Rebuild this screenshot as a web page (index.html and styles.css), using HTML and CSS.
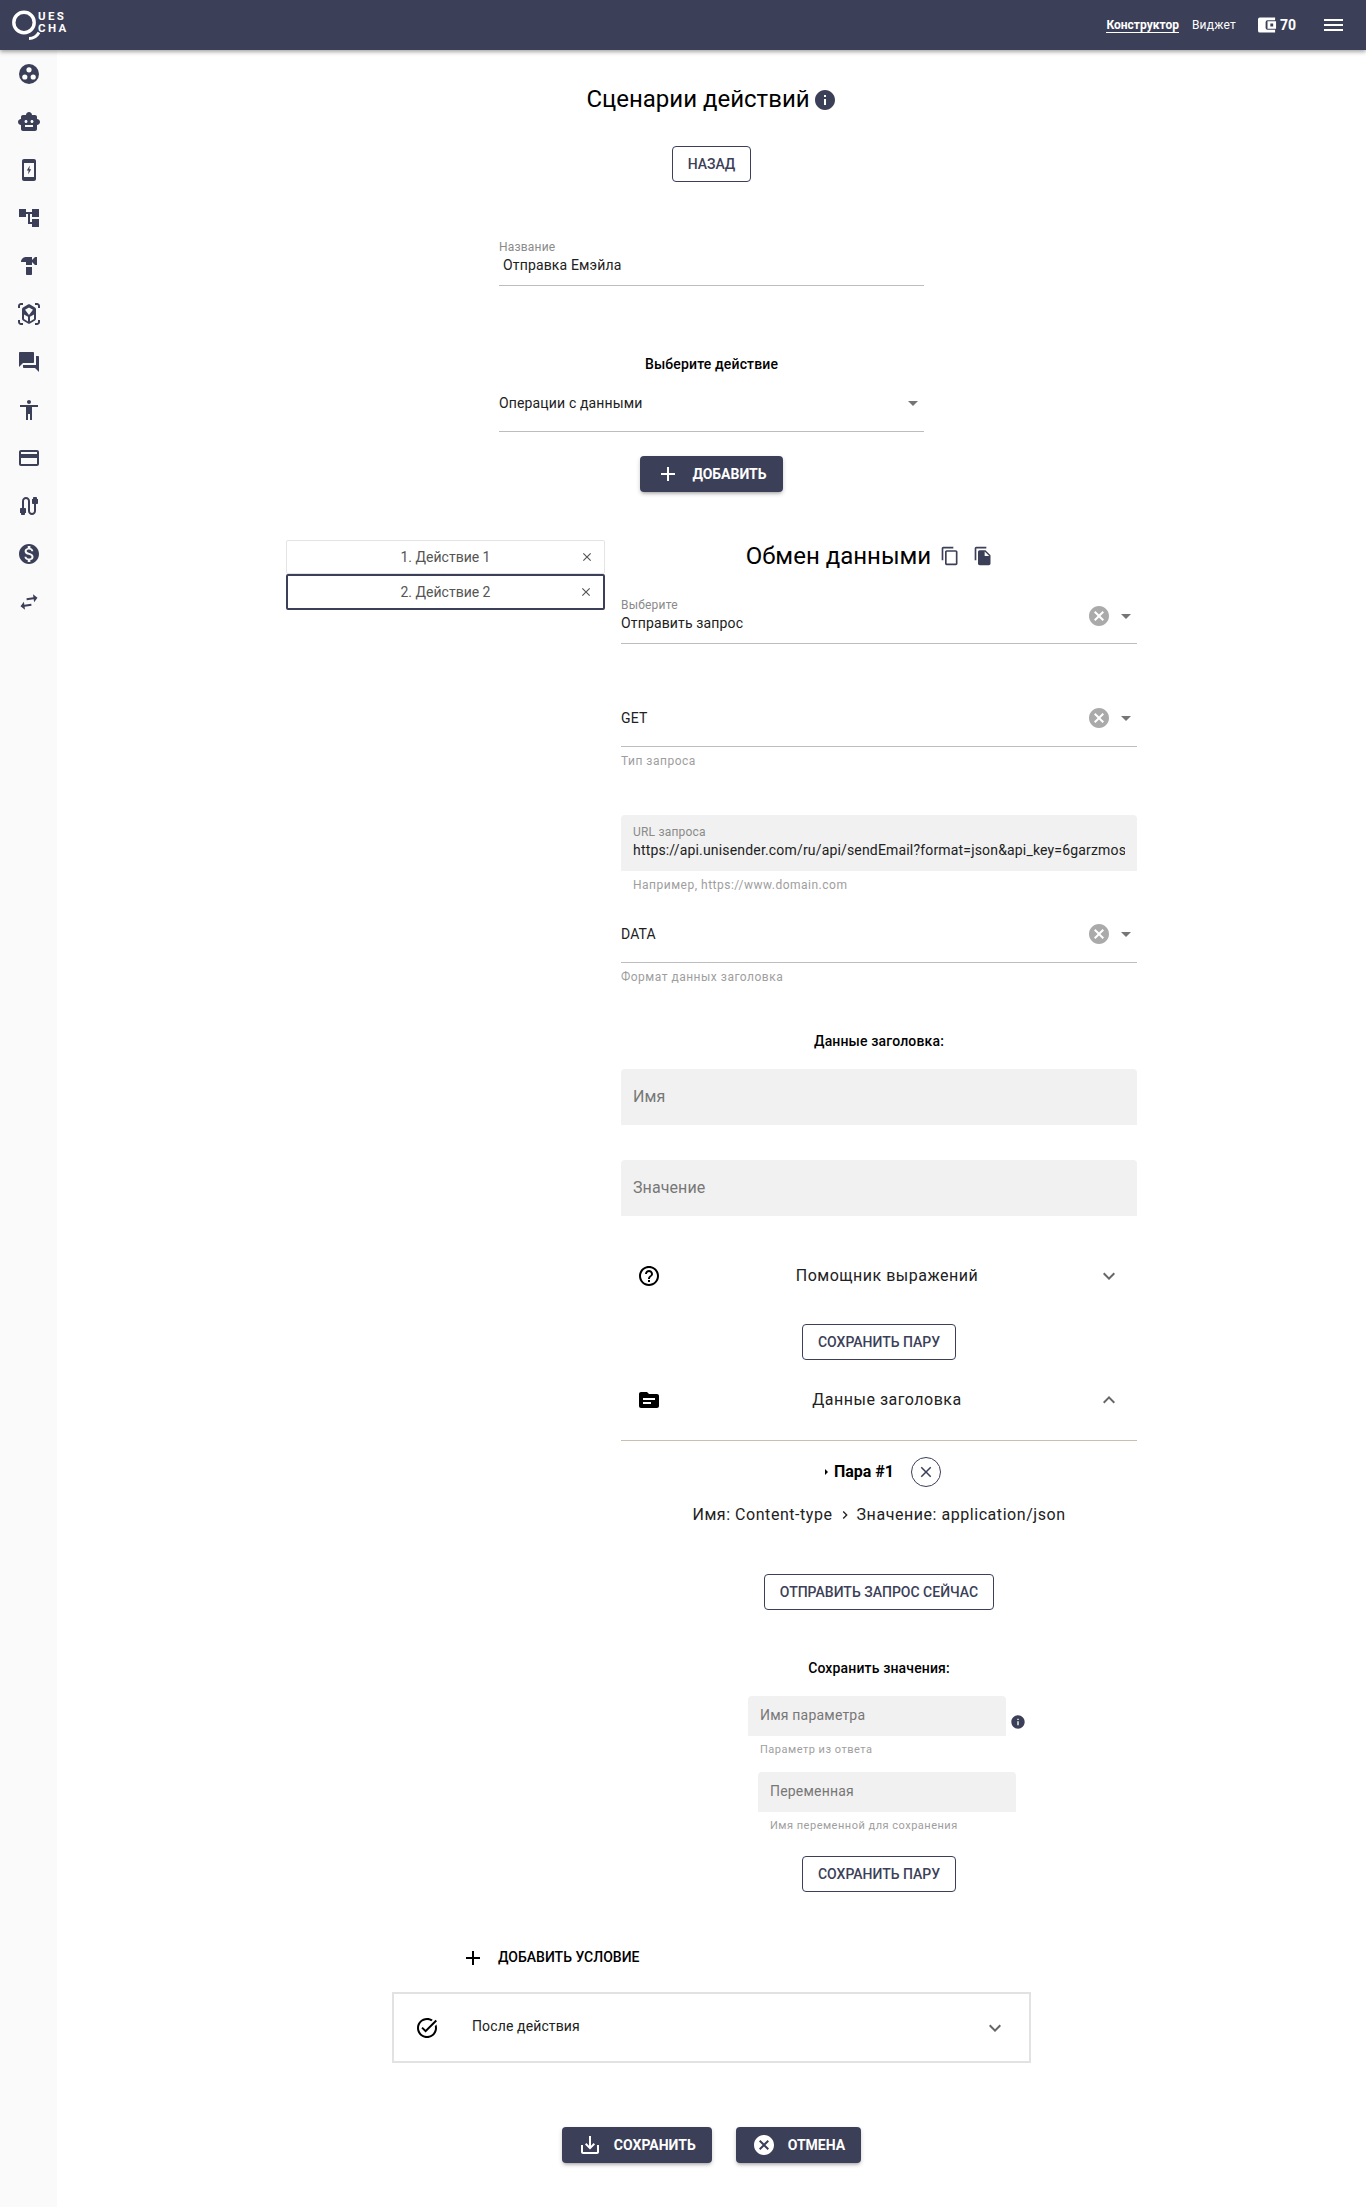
FILE: index.html
```html
<!DOCTYPE html>
<html lang="ru">
<head>
  <meta charset="UTF-8">
  <meta name="viewport" content="width=device-width, initial-scale=1.0">
  <title>Сценарии действий</title>
  <link rel="stylesheet" href="styles.css">
</head>
<body>
  <!-- Icon sprite -->
  <svg class="sprite" xmlns="http://www.w3.org/2000/svg">
    <symbol id="i-add" viewBox="0 0 24 24"><path d="M19 13h-6v6h-2v-6H5v-2h6V5h2v6h6v2z"/></symbol>
    <symbol id="i-close" viewBox="0 0 24 24"><path d="M19 6.41L17.59 5 12 10.59 6.41 5 5 6.41 10.59 12 5 17.59 6.41 19 12 13.41 17.59 19 19 17.59 13.41 12z"/></symbol>
    <symbol id="i-cancel" viewBox="0 0 24 24"><path d="M12 2C6.47 2 2 6.47 2 12s4.47 10 10 10 10-4.47 10-10S17.53 2 12 2zm5 13.59L15.59 17 12 13.41 8.41 17 7 15.59 10.59 12 7 8.41 8.41 7 12 10.59 15.59 7 17 8.41 13.41 12 17 15.59z"/></symbol>
    <symbol id="i-info" viewBox="0 0 24 24"><path d="M12 2C6.48 2 2 6.48 2 12s4.48 10 10 10 10-4.48 10-10S17.52 2 12 2zm1 15h-2v-6h2v6zm0-8h-2V7h2v2z"/></symbol>
    <symbol id="i-more" viewBox="0 0 24 24"><path d="M16.59 8.59L12 13.17 7.41 8.59 6 10l6 6 6-6z"/></symbol>
    <symbol id="i-less" viewBox="0 0 24 24"><path d="M12 8l-6 6 1.41 1.41L12 10.83l4.59 4.58L18 14z"/></symbol>
  </svg>

  <header class="topbar">
    <div class="logo">
      <svg class="logo-mark" viewBox="0 0 30 32"><circle cx="12" cy="12.500" r="10.200" fill="none" stroke="#fff" stroke-width="3.400"/><path d="M17 28.500c4 0 8-2.500 10-6" fill="none" stroke="#fff" stroke-width="3"/></svg>
      <div class="logo-text"><span>UES</span><span>CHA</span></div>
    </div>
    <nav class="top-nav">
      <a href="#" class="top-link active">Конструктор</a>
      <a href="#" class="top-link widget-link">Виджет</a>
      <span class="balance">
        <svg class="wallet" viewBox="0 0 20 16"><path d="M2 0h16v3h-8a2 2 0 0 0-2 2v6a2 2 0 0 0 2 2h8v3H2a2 2 0 0 1-2-2V2a2 2 0 0 1 2-2zM10 4h9v8h-9zm3 2.500v3h3v-3z" fill="#fff" fill-rule="evenodd"/></svg>
        70
      </span>
      <span class="burger"><i></i><i></i><i></i></span>
    </nav>
  </header>

  <div class="layout">
    <aside class="sidebar">
      <a href="#"><svg viewBox="0 0 24 24"><circle cx="12" cy="12" r="10"/><circle cx="12" cy="7.800" r="2.600" fill="#fff"/><circle cx="7.800" cy="15" r="2.600" fill="#fff"/><circle cx="16.200" cy="15" r="2.600" fill="#fff"/></svg></a>
      <a href="#"><svg viewBox="0 0 24 24"><path d="M20 9V7c0-1.100-.9-2-2-2h-3c0-1.660-1.340-3-3-3S9 3.340 9 5H6c-1.100 0-2 .9-2 2v2c-1.660 0-3 1.340-3 3s1.340 3 3 3v4c0 1.100.9 2 2 2h12c1.100 0 2-.9 2-2v-4c1.660 0 3-1.340 3-3s-1.340-3-3-3zM7.500 11.500C7.500 10.670 8.170 10 9 10s1.500.67 1.500 1.500S9.830 13 9 13s-1.500-.67-1.500-1.500zM16 17H8v-2h8v2zm-1-4c-.83 0-1.500-.67-1.500-1.500S14.170 10 15 10s1.500.67 1.500 1.500S15.830 13 15 13z"/></svg></a>
      <a href="#"><svg viewBox="0 0 24 24"><path d="M17 1H7C5.900 1 5 1.900 5 3v18c0 1.100.9 2 2 2h10c1.100 0 2-.9 2-2V3c0-1.100-.9-2-2-2zm0 18H7V5h10v14z"/><path d="M12.800 7.500L9.800 12.600h1.800l-.5 3.900 3.100-5.300h-1.900z"/></svg></a>
      <a href="#"><svg viewBox="0 0 24 24"><path d="M22 11V3h-7v3H9V3H2v8h7V8h2v10h4v3h7v-8h-7v3h-2V8h2v3z"/></svg></a>
      <a href="#"><svg viewBox="0 0 24 24"><path d="M18 3l-3 3V3H9C6.240 3 4 5.240 4 8h5v3h6V8l3 3h2V3h-2z"/><path d="M9 13v7c0 .55.45 1 1 1h4c.55 0 1-.45 1-1v-7H9z"/></svg></a>
      <a href="#"><svg viewBox="0 0 24 24"><path d="M3 4c0-.55.45-1 1-1h2V1H4C2.340 1 1 2.340 1 4v2h2V4zm0 16v-2H1v2c0 1.660 1.340 3 3 3h2v-2H4c-.55 0-1-.45-1-1zM20 1h-2v2h2c.55 0 1 .45 1 1v2h2V4c0-1.660-1.340-3-3-3zm1 19c0 .55-.45 1-1 1h-2v2h2c1.660 0 3-1.340 3-3v-2h-2v2zm-2-3.130V7.130c0-.71-.38-1.370-1-1.730l-5-2.880c-.31-.18-.65-.27-1-.27s-.69.09-1 .27L6 5.390c-.62.36-1 1.020-1 1.740v9.740c0 .72.38 1.380 1 1.740l5 2.880c.31.18.65.27 1 .27s.69-.09 1-.27l5-2.880c.62-.36 1-1.020 1-1.740zm-8 2.550l-4-2.320v-4.630l4 2.330v4.620zm1-6.350L8.040 7.750 12 5.450l3.960 2.300L12 13.070zm5 4.030l-4 2.320v-4.620l4-2.330v4.630z"/></svg></a>
      <a href="#"><svg viewBox="0 0 24 24"><path d="M21 6h-2v9H6v2c0 .55.45 1 1 1h11l4 4V7c0-.55-.45-1-1-1zm-4 6V3c0-.55-.45-1-1-1H3c-.55 0-1 .45-1 1v14l4-4h10c.55 0 1-.45 1-1z"/></svg></a>
      <a href="#"><svg viewBox="0 0 24 24"><path d="M12 2c1.100 0 2 .9 2 2s-.9 2-2 2-2-.9-2-2 .9-2 2-2zm9 7h-6v13h-2v-6h-2v6H9V9H3V7h18v2z"/></svg></a>
      <a href="#"><svg viewBox="0 0 24 24"><path d="M20 4H4c-1.110 0-1.990.89-1.990 2L2 18c0 1.110.89 2 2 2h16c1.110 0 2-.89 2-2V6c0-1.110-.89-2-2-2zm0 14H4v-6h16v6zm0-10H4V6h16v2z"/></svg></a>
      <a href="#"><svg viewBox="0 0 24 24"><path d="M20 5V4c0-.55-.45-1-1-1h-2c-.55 0-1 .45-1 1v1h-1v4c0 .55.45 1 1 1h1v7c0 1.100-.9 2-2 2s-2-.9-2-2V7c0-2.210-1.790-4-4-4S5 4.790 5 7v7H4c-.55 0-1 .45-1 1v4h1v1c0 .55.45 1 1 1h2c.55 0 1-.45 1-1v-1h1v-4c0-.55-.45-1-1-1H7V7c0-1.100.9-2 2-2s2 .9 2 2v10c0 2.210 1.790 4 4 4s4-1.790 4-4v-7h1c.55 0 1-.45 1-1V5h-1z"/></svg></a>
      <a href="#"><svg viewBox="0 0 24 24"><path d="M12 2C6.480 2 2 6.480 2 12s4.480 10 10 10 10-4.480 10-10S17.520 2 12 2zm1.410 16.090V20h-2.670v-1.930c-1.710-.36-3.160-1.460-3.270-3.400h1.960c.1 1.050.82 1.870 2.650 1.870 1.960 0 2.400-.98 2.400-1.590 0-.83-.44-1.610-2.670-2.140-2.480-.6-4.180-1.620-4.180-3.670 0-1.720 1.390-2.840 3.110-3.210V4h2.670v1.950c1.860.45 2.790 1.860 2.850 3.390H14.300c-.05-1.110-.64-1.870-2.220-1.870-1.500 0-2.400.68-2.400 1.640 0 .84.65 1.390 2.670 1.910s4.180 1.390 4.180 3.910c-.01 1.830-1.380 2.830-3.120 3.160z"/></svg></a>
      <a href="#"><svg viewBox="0 0 24 24"><path transform="rotate(-8 12 12)" d="M6.990 11L3 15l3.990 4v-3H14v-2H6.990v-3zM21 9l-3.990-4v3H10v2h7.010v3L21 9z"/></svg></a>
    </aside>

    <main class="content">
      <h1 class="page-title">Сценарии действий <svg class="info-icon"><use href="#i-info"/></svg></h1>
      <button class="btn-outline back-btn">НАЗАД</button>

      <div class="form-narrow name-field">
        <div class="field-label">Название</div>
        <div class="field-value indented">Отправка Емэйла</div>
      </div>

      <h3 class="sub-title choose-title">Выберите действие</h3>
      <div class="form-narrow select-row choose-select">
        <span class="field-value">Операции с данными</span>
        <span class="caret"></span>
      </div>
      <button class="btn-solid add-btn"><svg><use href="#i-add"/></svg>ДОБАВИТЬ</button>

      <section class="scenario">
        <ul class="action-tabs">
          <li class="action-tab">1. Действие 1 <svg><use href="#i-close"/></svg></li>
          <li class="action-tab selected">2. Действие 2 <svg><use href="#i-close"/></svg></li>
        </ul>

        <div class="action-form">
          <h2 class="action-title">Обмен данными
            <svg class="copy-icon" viewBox="0 0 24 24"><path d="M16 1H4c-1.100 0-2 .9-2 2v14h2V3h12V1zm3 4H8c-1.100 0-2 .9-2 2v14c0 1.100.9 2 2 2h11c1.100 0 2-.9 2-2V7c0-1.100-.9-2-2-2zm0 16H8V7h11v14z"/></svg>
            <svg class="copy-icon" viewBox="0 0 24 24"><path d="M16 1H4c-1.100 0-2 .9-2 2v14h2V3h12V1zm-1 4l6 6v10c0 1.100-.9 2-2 2H7.990C6.890 23 6 22.100 6 21l.01-14c0-1.100.89-2 1.990-2h7zm-1 7h5.500L14 6.500V12z"/></svg>
          </h2>

          <div class="select-row labelled">
            <div class="select-text">
              <div class="field-label">Выберите</div>
              <div class="field-value">Отправить запрос</div>
            </div>
            <svg class="clear-icon"><use href="#i-cancel"/></svg>
            <span class="caret"></span>
          </div>

          <div class="select-row get-select">
            <span class="field-value">GET</span>
            <svg class="clear-icon"><use href="#i-cancel"/></svg>
            <span class="caret"></span>
          </div>
          <div class="hint">Тип запроса</div>

          <div class="filled url-box">
            <div class="field-label">URL запроса</div>
            <div class="url-value">https://api.unisender.com/ru/api/sendEmail?format=json&amp;api_key=6garzmosgqtu1hdnb4wuqyyoe</div>
          </div>
          <div class="hint hint-pad">Например, https://www.domain.com</div>

          <div class="select-row data-select">
            <span class="field-value">DATA</span>
            <svg class="clear-icon"><use href="#i-cancel"/></svg>
            <span class="caret"></span>
          </div>
          <div class="hint">Формат данных заголовка</div>

          <h3 class="sub-title header-title">Данные заголовка:</h3>
          <div class="filled big-input name-input">Имя</div>
          <div class="filled big-input value-input">Значение</div>

          <div class="panel-head helper-head">
            <svg class="panel-icon" viewBox="0 0 24 24"><path d="M11 18h2v-2h-2v2zm1-16C6.480 2 2 6.480 2 12s4.480 10 10 10 10-4.480 10-10S17.520 2 12 2zm0 18c-4.410 0-8-3.590-8-8s3.590-8 8-8 8 3.590 8 8-3.590 8-8 8zm0-14c-2.210 0-4 1.790-4 4h2c0-1.100.9-2 2-2s2 .9 2 2c0 2-3 1.750-3 5h2c0-2.250 3-2.500 3-5 0-2.210-1.790-4-4-4z"/></svg>
            <span class="panel-title">Помощник выражений</span>
            <svg class="panel-arrow"><use href="#i-more"/></svg>
          </div>
          <div class="center-row"><button class="btn-outline pair-btn">СОХРАНИТЬ ПАРУ</button></div>

          <div class="panel-head pairs-head">
            <svg class="panel-icon" viewBox="0 0 24 24"><path d="M20 6h-8l-2-2H4c-1.100 0-1.990.9-1.990 2L2 18c0 1.100.9 2 2 2h16c1.100 0 2-.9 2-2V8c0-1.100-.9-2-2-2zm-6 10H6v-2h8v2zm4-4H6v-2h12v2z"/></svg>
            <span class="panel-title">Данные заголовка</span>
            <svg class="panel-arrow"><use href="#i-less"/></svg>
          </div>
          <div class="pair-row">
            <span class="mini-caret"></span>
            <strong>Пара #1</strong>
            <span class="round-close"><svg><use href="#i-close"/></svg></span>
          </div>
          <div class="pair-values">Имя: Content-type <svg viewBox="0 0 24 24"><path d="M10 6L8.590 7.410 13.170 12l-4.580 4.590L10 18l6-6z"/></svg> Значение: application/json</div>

          <div class="center-row send-row"><button class="btn-outline">ОТПРАВИТЬ ЗАПРОС СЕЙЧАС</button></div>

          <h3 class="sub-title save-title">Сохранить значения:</h3>
          <div class="save-group">
            <div class="param-row">
              <div class="filled small-input">Имя параметра</div>
              <svg class="param-info"><use href="#i-info"/></svg>
            </div>
            <div class="hint small-hint">Параметр из ответа</div>
            <div class="filled small-input second-input">Переменная</div>
            <div class="hint small-hint second-hint">Имя переменной для сохранения</div>
          </div>
          <div class="center-row save-pair-row"><button class="btn-outline pair-btn">СОХРАНИТЬ ПАРУ</button></div>
        </div>
      </section>

      <div class="condition-wrap">
        <div class="add-condition"><svg><use href="#i-add"/></svg>ДОБАВИТЬ УСЛОВИЕ</div>
        <div class="after-panel">
          <svg class="after-icon" viewBox="0 0 24 24"><path d="M22 5.180 10.590 16.600l-4.240-4.240 1.410-1.410 2.830 2.830 10-10L22 5.180zm-2.210 5.040c.13.57.21 1.170.21 1.780 0 4.420-3.580 8-8 8s-8-3.580-8-8 3.580-8 8-8c1.580 0 3.040.46 4.280 1.250l1.440-1.440C16.100 2.670 14.130 2 12 2 6.480 2 2 6.480 2 12s4.480 10 10 10 10-4.480 10-10c0-1.190-.22-2.330-.6-3.390l-1.610 1.610z"/></svg>
          <span class="after-title">После действия</span>
          <svg class="panel-arrow"><use href="#i-more"/></svg>
        </div>
      </div>

      <div class="bottom-actions">
        <button class="btn-solid"><svg viewBox="0 0 24 24"><path d="M19 12v7H5v-7H3v7c0 1.100.9 2 2 2h14c1.100 0 2-.9 2-2v-7h-2zm-6 .67l2.590-2.580L17 11.500l-5 5-5-5 1.410-1.410L11 12.670V3h2z"/></svg>СОХРАНИТЬ</button>
        <button class="btn-solid"><svg><use href="#i-cancel"/></svg>ОТМЕНА</button>
      </div>
    </main>
  </div>
</body>
</html>
```

FILE: styles.css
```css
/* Global Styles */
* {
  box-sizing: border-box;
}

body {
  margin: 0;
  font-family: Roboto, "Noto Sans", sans-serif;
  font-size: 14px;
  color: #212121;
  background-color: #fff;
}

.sprite {
  display: none;
}

button {
  font-family: inherit;
  cursor: pointer;
}

/* Top bar */
.topbar {
  height: 50px;
  background-color: #3c3f58;
  box-shadow: 0 2px 4px rgba(0, 0, 0, 0.35);
  display: flex;
  justify-content: space-between;
  align-items: center;
  position: relative;
  z-index: 2;
}

.logo {
  display: flex;
  margin-left: 12px;
  color: #fff;
}

.logo-mark {
  width: 30px;
  height: 32px;
  margin-top: 1px;
}

.logo-text {
  display: flex;
  flex-direction: column;
  margin: 1px 0 0 -4px;
  font-size: 11.5px;
  font-weight: 700;
  line-height: 12px;
  letter-spacing: 2.4px;
}

.top-nav {
  display: flex;
  align-items: center;
  padding-right: 23px;
}

.top-link {
  color: #fff;
  font-size: 12px;
  text-decoration: none;
  margin-right: 13px;
}

.top-link.active {
  font-weight: 700;
  border-bottom: 1px solid #fff;
}

.widget-link {
  letter-spacing: 0.2px;
}

.balance {
  display: flex;
  align-items: center;
  gap: 3px;
  margin: 0 28px 0 9px;
  color: #fff;
  font-size: 14px;
  font-weight: 700;
}

.wallet {
  width: 19px;
  height: 16px;
}

.burger {
  display: flex;
  flex-direction: column;
  gap: 3px;
  width: 19px;
}

.burger i {
  display: block;
  height: 2px;
  background-color: #fff;
}

/* Layout */
.layout {
  display: flex;
}

.sidebar {
  width: 57px;
  flex-shrink: 0;
  background-color: #fafafa;
  padding-top: 12px;
  min-height: 2157px;
  display: flex;
  flex-direction: column;
  align-items: center;
  gap: 24px;
}

.sidebar a {
  display: block;
  height: 24px;
}

.sidebar svg {
  width: 24px;
  height: 24px;
  fill: #3c3f58;
  display: block;
}

.content {
  flex: 1;
  display: flex;
  flex-direction: column;
  align-items: center;
  padding-top: 35px;
}

.page-title {
  margin: 0;
  font-size: 24px;
  font-weight: 400;
  line-height: 28px;
  color: #000;
  display: flex;
  align-items: center;
  gap: 3px;
}

.info-icon {
  width: 24px;
  height: 24px;
  fill: #3c3f58;
  margin-top: 1px;
}

/* Buttons */
.btn-outline {
  height: 36px;
  padding: 0 15px;
  background-color: #fff;
  border: 1px solid #3c3f58;
  border-radius: 4px;
  color: #3c3f58;
  font-size: 14px;
  font-weight: 500;
}

.btn-solid {
  height: 36px;
  padding: 0 16px;
  background-color: #3c3f58;
  border: none;
  border-radius: 4px;
  color: #fff;
  font-size: 14px;
  font-weight: 700;
  display: flex;
  align-items: center;
  box-shadow: 0 3px 3px -2px rgba(0, 0, 0, 0.2), 0 2px 4px rgba(0, 0, 0, 0.2);
}

.btn-solid svg {
  width: 24px;
  height: 24px;
  fill: #fff;
  margin-right: 12px;
}

.back-btn {
  margin-top: 33px;
}

/* Fields */
.form-narrow {
  width: 425px;
}

.field-label {
  font-size: 12px;
  line-height: 14px;
  letter-spacing: 0.2px;
  color: #8a8a8a;
}

.field-value {
  font-size: 14px;
  line-height: 20px;
  letter-spacing: 0.15px;
  color: #212121;
}

.indented {
  padding-left: 4px;
}

.name-field {
  margin-top: 58px;
  padding-bottom: 10px;
  border-bottom: 1px solid #bdbdbd;
}

.name-field .field-value {
  margin-top: 1px;
}

.sub-title {
  margin: 0;
  font-size: 14px;
  font-weight: 500;
  line-height: 20px;
  letter-spacing: 0.15px;
  color: #000;
  text-align: center;
}

.choose-title {
  margin-top: 68px;
}

.select-row {
  display: flex;
  align-items: flex-start;
  justify-content: space-between;
  border-bottom: 1px solid #bdbdbd;
  padding-bottom: 18px;
}

.select-text {
  flex: 1;
}

.caret {
  width: 0;
  height: 0;
  border-left: 5px solid transparent;
  border-right: 5px solid transparent;
  border-top: 5px solid #757575;
  margin: 8px 6px 0 0;
}

.clear-icon {
  width: 24px;
  height: 24px;
  fill: #aaa;
  margin: -2px 10px -2px auto;
}

.choose-select {
  margin-top: 19px;
}

.add-btn {
  margin-top: 24px;
}

/* Scenario area */
.scenario {
  width: 851px;
  margin-top: 48px;
  display: flex;
  gap: 16px;
  align-items: flex-start;
}

.action-tabs {
  list-style: none;
  margin: 0;
  padding: 0;
  width: 319px;
  flex-shrink: 0;
}

.action-tab {
  height: 34px;
  border: 1px solid #e4e4e4;
  border-radius: 2px;
  display: flex;
  align-items: center;
  justify-content: center;
  color: #555;
  position: relative;
}

.action-tab svg {
  position: absolute;
  right: 10px;
  top: 50%;
  width: 14px;
  height: 14px;
  margin-top: -7px;
  fill: #555;
}

.action-tab.selected {
  height: 36px;
  border: 2px solid #3c3f58;
}

.action-form {
  width: 516px;
}

.action-title {
  margin: 0;
  font-size: 24px;
  font-weight: 400;
  line-height: 32px;
  color: #000;
  display: flex;
  justify-content: center;
  align-items: center;
  padding-right: 19px;
}

.copy-icon {
  width: 20px;
  height: 20px;
  fill: #3c3f58;
  margin-left: 13px;
}

.action-title .copy-icon:first-of-type {
  margin-left: 9px;
}

.labelled {
  margin-top: 26px;
  padding-bottom: 10px;
}

.labelled .field-value {
  margin-top: 1px;
}

.labelled .clear-icon {
  margin-top: 6px;
}

.labelled .caret {
  margin-top: 16px;
}

.get-select {
  margin-top: 64px;
}

.hint {
  margin-top: 7px;
  font-size: 12px;
  line-height: 14px;
  letter-spacing: 0.5px;
  color: #9e9e9e;
}

.hint-pad {
  padding-left: 12px;
}

.filled {
  background-color: #f1f1f1;
  border-radius: 4px 4px 0 0;
}

.url-box {
  margin-top: 47px;
  height: 56px;
  padding: 10px 12px 0;
}

.url-value {
  margin-top: 1px;
  font-size: 14px;
  line-height: 20px;
  letter-spacing: 0.17px;
  white-space: nowrap;
  overflow: hidden;
}

.data-select {
  margin-top: 32px;
}

.header-title {
  margin-top: 47px;
}

.big-input {
  height: 56px;
  padding: 0 12px 2px;
  display: flex;
  align-items: center;
  font-size: 16px;
  letter-spacing: 0.1px;
  color: #777;
}

.name-input {
  margin-top: 18px;
}

.value-input {
  margin-top: 35px;
}

.panel-head {
  height: 48px;
  display: flex;
  align-items: center;
  padding: 0 16px;
}

.panel-icon {
  width: 24px;
  height: 24px;
  fill: #000;
  flex-shrink: 0;
}

.panel-title {
  flex: 1;
  padding: 0 0 2px 16px;
  text-align: center;
  font-size: 16px;
  letter-spacing: 0.5px;
  color: #212121;
}

.panel-arrow {
  width: 24px;
  height: 24px;
  fill: #666;
  flex-shrink: 0;
}

.helper-head {
  margin-top: 36px;
}

.center-row {
  display: flex;
  justify-content: center;
  margin-top: 24px;
}

.pairs-head {
  margin-top: 16px;
  height: 65px;
  padding-bottom: 16px;
  border-bottom: 1px solid #c9bfae;
}

.pair-row {
  margin-top: 16px;
  padding-left: 8px;
  display: flex;
  justify-content: center;
  align-items: center;
  font-size: 16px;
  color: #000;
}

.pair-row strong {
  margin-bottom: 2px;
}

.mini-caret {
  width: 0;
  height: 0;
  border-top: 3px solid transparent;
  border-bottom: 3px solid transparent;
  border-left: 3px solid #000;
  margin-right: 6px;
}

.round-close {
  width: 30px;
  height: 30px;
  border: 1px solid #3c3f58;
  border-radius: 50%;
  margin-left: 17px;
  display: flex;
  align-items: center;
  justify-content: center;
}

.round-close svg {
  width: 18px;
  height: 18px;
  fill: #3c3f58;
}

.pair-values {
  margin-top: 15px;
  height: 24px;
  display: flex;
  justify-content: center;
  align-items: center;
  gap: 4px;
  font-size: 16px;
  letter-spacing: 0.55px;
}

.pair-values svg {
  width: 16px;
  height: 16px;
  margin: 2px 0 0;
  fill: #212121;
}

.send-row {
  margin-top: 48px;
}

.save-title {
  margin-top: 48px;
}

.save-group {
  margin: 18px 0 0 127px;
  width: 268px;
}

.param-row {
  display: flex;
}

.small-input {
  width: 258px;
  height: 40px;
  padding: 0 12px 2px;
  display: flex;
  align-items: center;
  color: #777;
  letter-spacing: 0.2px;
  flex-shrink: 0;
}

.param-info {
  width: 16px;
  height: 16px;
  fill: #3c3f58;
  margin: 18px 0 0 4px;
  flex-shrink: 0;
}

.small-hint {
  margin-top: 7px;
  padding-left: 12px;
  font-size: 11px;
  letter-spacing: 0.5px;
}

.second-input {
  margin: 15px 0 0 10px;
}

.second-hint {
  margin-left: 10px;
}

.save-pair-row {
  margin-top: 23px;
}

/* Conditions */
.condition-wrap {
  width: 639px;
  margin-top: 54px;
}

.add-condition {
  display: flex;
  align-items: center;
  gap: 13px;
  height: 24px;
  padding-bottom: 2px;
  margin-left: 69px;
  font-size: 14px;
  font-weight: 500;
  color: #000;
}

.add-condition svg {
  width: 24px;
  height: 24px;
  margin-bottom: -2px;
  fill: #000;
}

.after-panel {
  margin-top: 22px;
  height: 71px;
  border: 2px solid #e2e2e2;
  display: flex;
  align-items: center;
  padding: 0 22px 0 21px;
}

.after-icon {
  width: 24px;
  height: 24px;
  fill: #000;
}

.after-title {
  flex: 1;
  margin-left: 33px;
  padding-bottom: 3px;
  font-size: 14px;
  letter-spacing: 0.13px;
}

/* Bottom actions */
.bottom-actions {
  display: flex;
  gap: 24px;
  margin: 64px 0 44px;
}
```
